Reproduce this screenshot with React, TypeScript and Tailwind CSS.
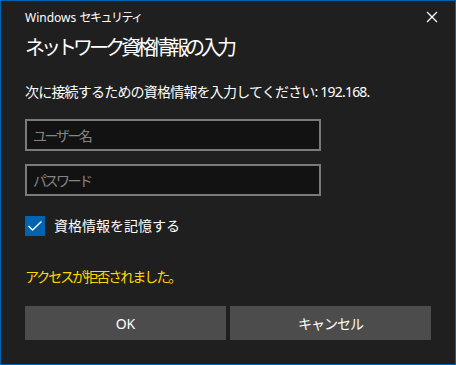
export default function App() {
  return (
    <div
      className="w-[456px] h-[365px] bg-[#1f1f1f] border border-[#0063b1] flex flex-col text-white overflow-hidden"
      style={{ fontFamily: '"Noto Sans", "Noto Sans CJK JP", sans-serif' }}
    >
      {/* Header */}
      <div className="mt-[7px] h-[20px] flex items-center justify-between pl-6 pr-[17px]">
        <span className="text-[12px] leading-[20px] text-white">
          Windows <span className="tracking-[-1.5px]">セキュリティ</span>
        </span>
        <svg width="12" height="12" viewBox="0 0 12 12" className="mt-[-2px]">
          <path d="M1 1 L11 11 M11 1 L1 11" stroke="#ffffff" strokeWidth="1.3" />
        </svg>
      </div>

      <div className="flex flex-col px-6">
        <h1 className="mt-[6px] text-[20px] leading-[28px] font-normal tracking-[-4px]">
          ネットワーク資格情報の入力
        </h1>

        <p className="mt-[20px] text-[14px] leading-[20px] tracking-[-0.8px]">
          次に接続するための資格情報を入力してください: 192.168.
        </p>

        <div className="mt-[17px] w-[296px] h-[32px] border-2 border-[#7a7a7a] bg-[#121212] flex items-center px-[6px]">
          <span className="text-[14px] text-[#858585] tracking-[-2.5px]">ユーザー名</span>
        </div>
        <div className="mt-[13px] w-[296px] h-[32px] border-2 border-[#7a7a7a] bg-[#121212] flex items-center px-[6px]">
          <span className="text-[14px] text-[#858585] tracking-[-2.5px]">パスワード</span>
        </div>

        <div className="mt-[20px] h-[20px] flex items-center gap-[9px]">
          <div className="w-[20px] h-[20px] bg-[#0063b1] flex items-center justify-center">
            <svg width="16" height="12" viewBox="0 0 16 12">
              <path d="M1.5 6 L5.5 10 L14.5 1.5" fill="none" stroke="#ffffff" strokeWidth="1.4" />
            </svg>
          </div>
          <span className="text-[14px] leading-[20px]">資格情報を記憶する</span>
        </div>

        <p className="mt-[31px] text-[14px] leading-[20px] text-[#ffd800] tracking-[-2px]">
          アクセスが拒否されました。
        </p>

        <div className="mt-[19px] flex gap-[4px]">
          <button className="w-[201px] h-[34px] bg-[#4c4c4c] text-[14px] text-white">OK</button>
          <button className="w-[201px] h-[34px] bg-[#4c4c4c] text-[14px] text-white tracking-[-1px]">
            キャンセル
          </button>
        </div>
      </div>
    </div>
  );
}
